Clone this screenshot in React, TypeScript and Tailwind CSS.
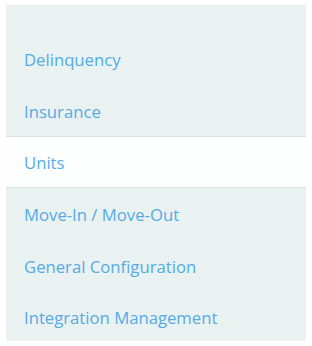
export default function App() {
  const items = [
    'Delinquency',
    'Insurance',
    'Units',
    'Move-In / Move-Out',
    'General Configuration',
    'Integration Management',
  ];
  const active = 'Units';

  return (
    <div className="w-[312px] h-[346px] bg-white pt-[5px] pl-[6px]" style={{ fontFamily: '"Open Sans", sans-serif' }}>
      <div className="w-[300px] h-[336px] bg-[#e9f1f1] pt-[28px]">
        {items.map((item) => (
          <div
            key={item}
            className={
              item === active
                ? 'h-[52px] flex items-center pl-[18px] pt-[2px] bg-[#fdfefe] border-y border-[#d5e0e2] text-[16.7px] text-[#55abe6]'
                : 'h-[51.5px] flex items-center pl-[18px] pt-[2px] text-[16.7px] text-[#55abe6]'
            }
          >
            {item}
          </div>
        ))}
      </div>
    </div>
  );
}
